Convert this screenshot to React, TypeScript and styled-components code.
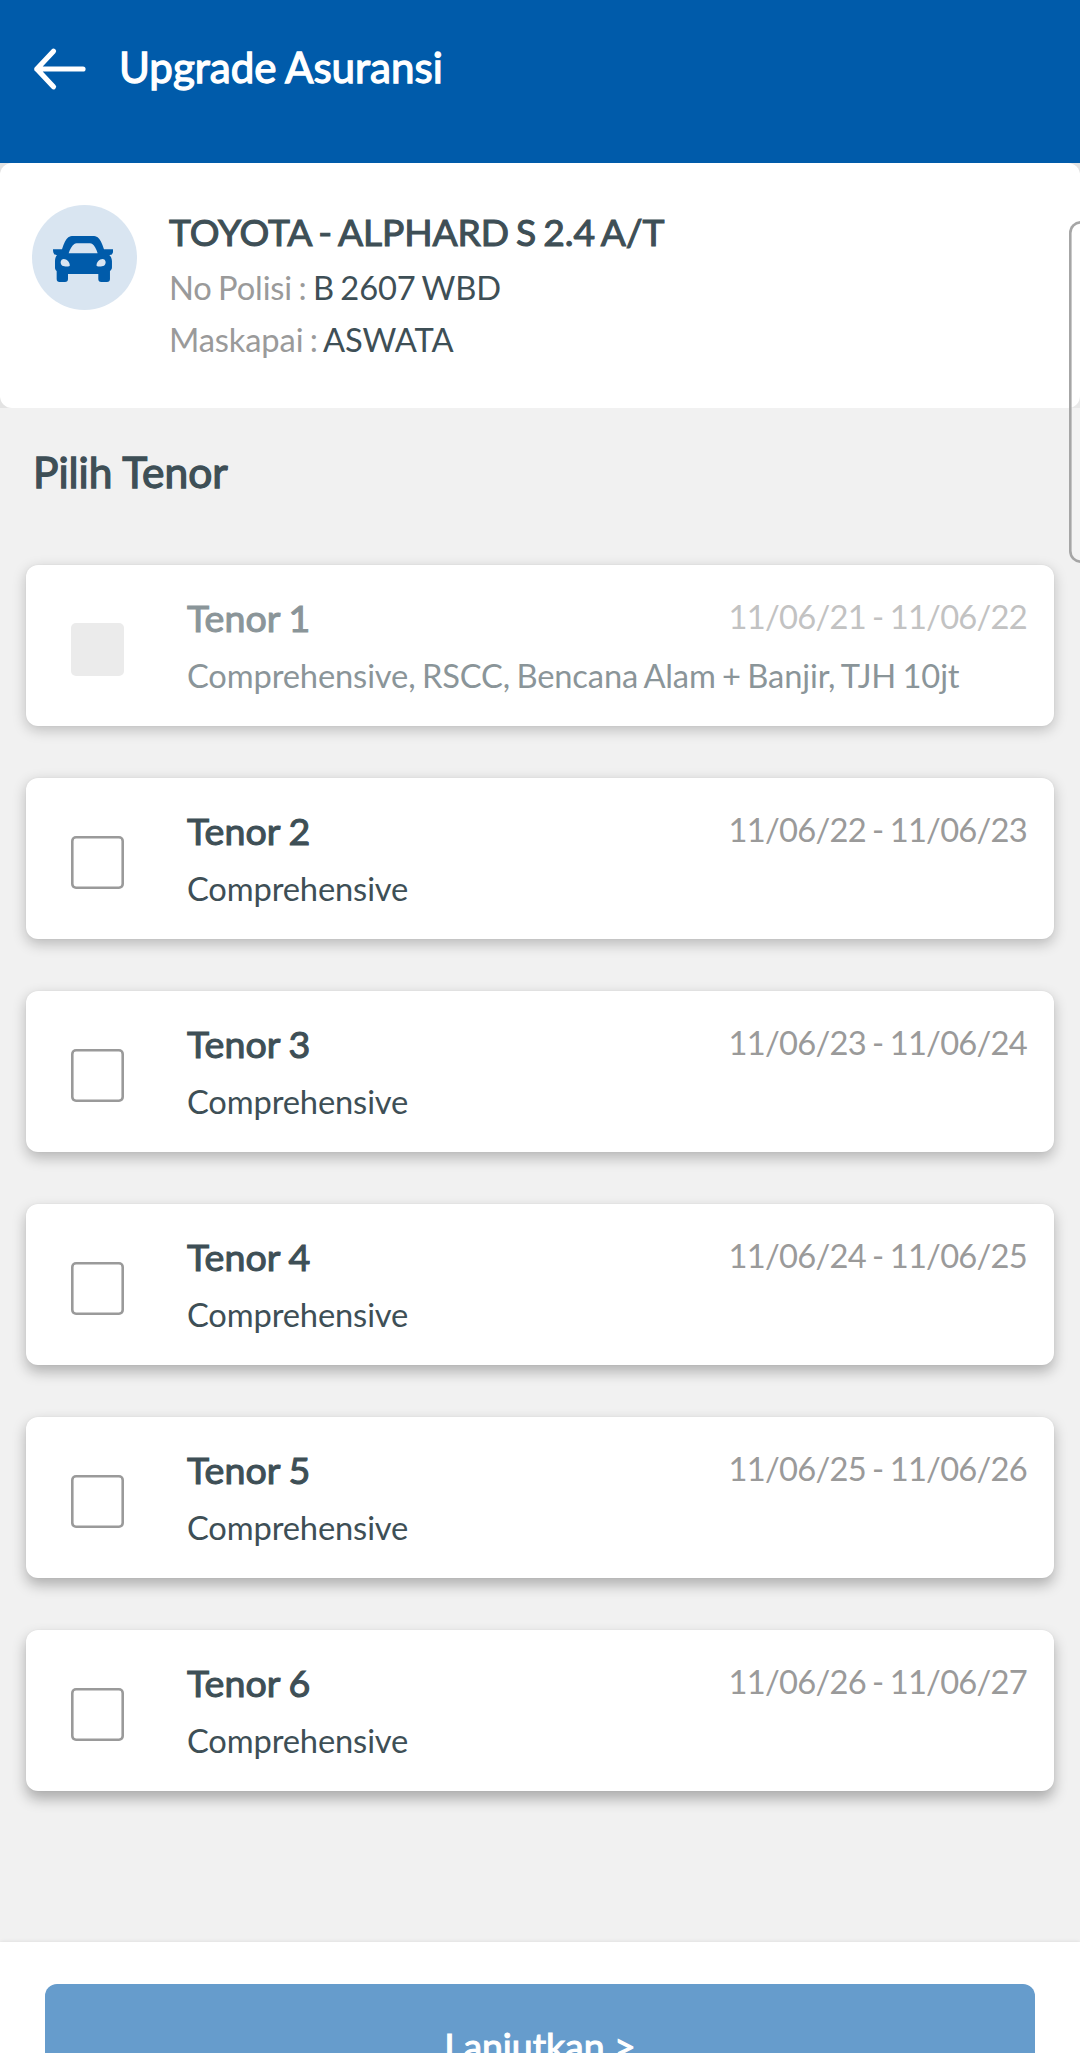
import React from "react";
import styled, { createGlobalStyle } from "styled-components";

const GlobalStyle = createGlobalStyle`
  html, body { margin: 0; padding: 0; background: #f1f1f1; overflow: hidden; }
  * { box-sizing: border-box; }
`;

const Screen = styled.div`
  position: relative;
  width: 1080px;
  height: 2053px;
  overflow: hidden;
  display: flex;
  flex-direction: column;
  background: #f1f1f1;
  color: #3e4f56;
  font-family: Lato, sans-serif;
  font-size: 32.7px;
  line-height: 40px;
  letter-spacing: -0.15px;
  word-spacing: -1.8px;
`;

const Header = styled.header`
  height: 163px;
  flex: none;
  display: flex;
  align-items: flex-start;
  padding: 42px 0 0 33px;
  gap: 33px;
  background: #005baa;
  color: #fff;
`;

const BackIcon = styled.svg`
  width: 53px;
  height: 54px;
  flex: none;
`;

const Title = styled.h1`
  margin: -1px 0 0;
  font-size: 42.1px;
  font-weight: 400;
  line-height: 52px;
  letter-spacing: 0;
  word-spacing: -1px;
  -webkit-text-stroke: 1.3px currentColor;
`;

const VehicleBackdrop = styled.section`
  height: 245px;
  flex: none;
  background: #e3e3e3;
`;

const VehicleCard = styled.div`
  height: 100%;
  display: flex;
  gap: 32px;
  padding: 42px 32px 0;
  background: #fff;
  border-radius: 12px;
`;

const CarBadge = styled.div`
  width: 105px;
  height: 105px;
  flex: none;
  display: flex;
  align-items: center;
  justify-content: center;
  padding: 3px 3px 0 0;
  border-radius: 50%;
  background: #d9e5f1;
  color: #005baa;
`;

const CarIcon = styled.svg`
  width: 60.3px;
  height: 46px;
`;

const VehicleInfo = styled.div`
  display: flex;
  flex-direction: column;
  padding-top: 4px;
`;

const VehicleName = styled.h2`
  margin: 0 0 11px;
  font-size: 37.2px;
  font-weight: 400;
  line-height: 46px;
  letter-spacing: -0.12px;
  word-spacing: -2.2px;
  -webkit-text-stroke: 1.1px currentColor;
`;

const Detail = styled.div`
  height: 52px;
  line-height: 44px;
  white-space: pre;
`;

const Label = styled.span`
  color: #9a9a9a;
`;

const SectionTitle = styled.h2`
  margin: 38px 0 67px 33px;
  font-size: 42.5px;
  font-weight: 400;
  line-height: 52px;
  letter-spacing: 0;
  word-spacing: 0;
  -webkit-text-stroke: 1.3px currentColor;
`;

const TenorList = styled.main`
  flex: 1;
  display: flex;
  flex-direction: column;
  gap: 52px;
  padding: 0 26px;
`;

const TenorCard = styled.article<{ $level: number }>`
  height: 161px;
  flex: none;
  display: flex;
  padding: 0 27px 0 45px;
  background: #fff;
  border-radius: 12px;
  box-shadow: 0 ${(p) => 4 + p.$level * 0.7}px 14px rgba(0, 0, 0, ${(p) => 0.22 + p.$level * 0.014}),
    0 0 2px rgba(0, 0, 0, 0.06);
`;

const Checkbox = styled.div<{ $disabled: boolean }>`
  width: 53px;
  height: 53px;
  flex: none;
  margin: 58px 63px 0 0;
  border-radius: 5px;
  box-shadow: ${(p) => (p.$disabled ? "none" : "inset 0 0 0 2.6px #9a9a9a")};
  background: ${(p) => (p.$disabled ? "#ebebeb" : "#fff")};
`;

const TenorBody = styled.div<{ $disabled: boolean }>`
  flex: 1;
  padding-top: 31px;
  opacity: ${(p) => (p.$disabled ? 0.6 : 1)};
`;

const TenorTop = styled.div`
  display: flex;
  justify-content: space-between;
  height: 60px;
`;

const TenorName = styled.h3`
  margin: -1px 0 0;
  font-size: 37.6px;
  font-weight: 400;
  line-height: 46px;
  letter-spacing: 0;
  word-spacing: -0.8px;
  -webkit-text-stroke: 1.1px currentColor;
`;

const Period = styled.span`
  color: #9a9a9a;
  line-height: 42px;
  letter-spacing: -0.75px;
  word-spacing: -1.4px;
`;

const Footer = styled.footer`
  height: 111px;
  flex: none;
  padding: 42px 45px 0;
  background: #fff;
  box-shadow: 0 0 4px rgba(0, 0, 0, 0.1);
  overflow: hidden;
`;

const NextButton = styled.button`
  display: block;
  width: 100%;
  height: 126px;
  border: 0;
  padding: 0 0 2px;
  border-radius: 12px;
  background: #669ccc;
  color: #fff;
  font: 400 37.4px/124px Lato, sans-serif;
  -webkit-text-stroke: 1.1px currentColor;
`;

const EdgeHandle = styled.div`
  position: absolute;
  left: 1069px;
  top: 221px;
  width: 40px;
  height: 342px;
  box-shadow: inset 0 0 0 2.6px #a6a6a6;
  border-radius: 12px;
  background: rgba(255, 255, 255, 0.2);
`;

const COVER = "Comprehensive";

const tenors = [
  { name: "Tenor 1", period: "11/06/21 - 11/06/22", cover: "Comprehensive, RSCC, Bencana Alam + Banjir, TJH 10jt", disabled: true },
  { name: "Tenor 2", period: "11/06/22 - 11/06/23", cover: COVER, disabled: false },
  { name: "Tenor 3", period: "11/06/23 - 11/06/24", cover: COVER, disabled: false },
  { name: "Tenor 4", period: "11/06/24 - 11/06/25", cover: COVER, disabled: false },
  { name: "Tenor 5", period: "11/06/25 - 11/06/26", cover: COVER, disabled: false },
  { name: "Tenor 6", period: "11/06/26 - 11/06/27", cover: COVER, disabled: false },
];

export default function App() {
  return (
    <>
      <GlobalStyle />
      <Screen>
        <Header>
          <BackIcon viewBox="0 0 53 54" fill="none" stroke="#fff" strokeWidth="5.2" strokeLinecap="round" strokeLinejoin="round">
            <path d="M20.5 9.2 3.8 27l16.7 17.8M3.8 27H50" />
          </BackIcon>
          <Title>Upgrade Asuransi</Title>
        </Header>
        <VehicleBackdrop>
          <VehicleCard>
            <CarBadge>
              <CarIcon viewBox="0 0 181 138" fill="currentColor">
                <path
                  fillRule="evenodd"
                  d="M0 40h27C33 22 39 9 46 4c4-3 9-4 15-4h58c6 0 11 1 15 4 7 5 13 18 19 36h28c0 7-1 12-4 15-2 2-5 2-8 2 5 5 8 11 8 19v18c0 5-2 8-6 11v24c0 6-3 9-9 9h-17c-6 0-9-3-9-9v-15H45v15c0 6-3 9-9 9H20c-6 0-9-3-9-9v-24c-4-3-5-6-5-11V76c0-8 2-14 6-19-3 0-6 0-8-2-3-3-4-8-4-15ZM47 52h87c-4-13-9-23-16-28-2-1-4-2-7-2H71c-3 0-5 1-7 2-7 5-13 15-17 28ZM26 71c-3 3-4 8-2 13 2 5 5 6 10 7 5 1 11 1 16-1 1-5-1-11-5-15-5-6-14-8-19-4Zm129 0c3 3 4 8 2 13-2 5-5 6-10 7-5 1-11 1-16-1-1-5 1-11 5-15 5-6 14-8 19-4Z"
                />
              </CarIcon>
            </CarBadge>
            <VehicleInfo>
              <VehicleName>TOYOTA - ALPHARD S 2.4 A/T</VehicleName>
              <Detail><Label>No Polisi : </Label>B 2607 WBD</Detail>
              <Detail><Label>Maskapai : </Label>ASWATA</Detail>
            </VehicleInfo>
          </VehicleCard>
        </VehicleBackdrop>
        <SectionTitle>Pilih Tenor</SectionTitle>
        <TenorList>
          {tenors.map((t, i) => (
            <TenorCard key={t.name} $level={i}>
              <Checkbox $disabled={t.disabled} />
              <TenorBody $disabled={t.disabled}>
                <TenorTop>
                  <TenorName>{t.name}</TenorName>
                  <Period>{t.period}</Period>
                </TenorTop>
                <div>{t.cover}</div>
              </TenorBody>
            </TenorCard>
          ))}
        </TenorList>
        <Footer>
          <NextButton>Lanjutkan &gt;</NextButton>
        </Footer>
        <EdgeHandle />
      </Screen>
    </>
  );
}
